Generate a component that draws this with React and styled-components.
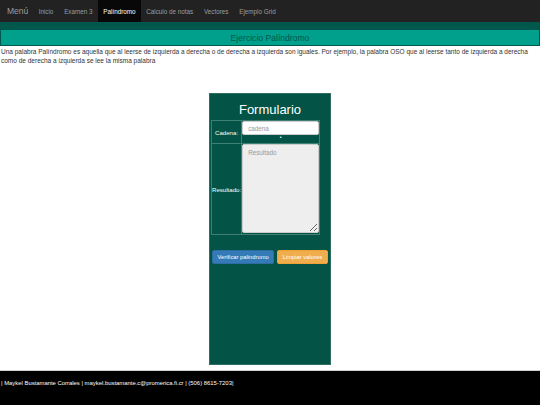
import React from "react";
import styled, { createGlobalStyle } from "styled-components";

const GlobalStyle = createGlobalStyle`
  html, body {
    margin: 0;
    padding: 0;
    background: #ffffff;
    font-family: "Liberation Sans", Arial, sans-serif;
    color: #333333;
  }
  * {
    box-sizing: border-box;
  }
`;

const navItems = ["Inicio", "Examen 3", "Palíndromo", "Calculo de notas", "Vectores", "Ejemplo Grid"];

const App = () => {
  return (
    <>
      <GlobalStyle />
      <Page>
        <Navbar>
          <Brand>Menú</Brand>
          {navItems.map((item) => (
            <NavItem key={item} active={item === "Palíndromo"}>
              {item}
            </NavItem>
          ))}
        </Navbar>
        <Band />
        <TitleBar>Ejercicio Palíndromo</TitleBar>
        <Intro>
          Una palabra Palíndromo es aquella que al leerse de izquierda a derecha o de derecha a
          izquierda son iguales. Por ejemplo, la palabra OSO que al leerse tanto de izquierda a
          derecha como de derecha a izquierda se lee la misma palabra
        </Intro>

        <Main>
          <FormPanel>
            <FormTitle>Formulario</FormTitle>
            <FormTable>
              <tbody>
                <tr>
                  <LabelCell>Cadena:</LabelCell>
                  <FieldCell>
                    <TextInput placeholder="cadena" />
                    <Hint>•</Hint>
                  </FieldCell>
                </tr>
                <tr>
                  <LabelCell>Resultado:</LabelCell>
                  <FieldCell>
                    <ResultArea placeholder="Resultado" readOnly />
                  </FieldCell>
                </tr>
              </tbody>
            </FormTable>
            <Actions>
              <Button variant="primary">Verificar palindromo</Button>
              <Button variant="warning">Limpiar valores</Button>
            </Actions>
          </FormPanel>
        </Main>

        <Footer>
          | Maykel Bustamante Corrales | maykel.bustamante.c@promerica.fi.cr | (506) 8615-7203|
        </Footer>
      </Page>
    </>
  );
};

export default App;

const Page = styled.div`
  width: 540px;
  height: 405px;
  display: flex;
  flex-direction: column;
`;

const Navbar = styled.nav`
  height: 22px;
  background: #222222;
  display: flex;
  align-items: stretch;
  padding-left: 7px;
`;

const Brand = styled.span`
  font-size: 8.5px;
  color: #9d9d9d;
  display: flex;
  align-items: center;
  margin-right: 5px;
`;

const NavItem = styled.span`
  font-size: 6.3px;
  color: ${(props) => (props.active ? "#ffffff" : "#9d9d9d")};
  background: ${(props) => (props.active ? "#080808" : "transparent")};
  display: flex;
  align-items: center;
  padding: 0 5.4px;
`;

const Band = styled.div`
  height: 8px;
  background: #00574b;
`;

const TitleBar = styled.div`
  height: 16px;
  background: #00a08d;
  border: 1px solid #00574b;
  border-top: 0;
  display: flex;
  align-items: center;
  justify-content: center;
  font-size: 8.6px;
  color: #00574b;
`;

const Intro = styled.p`
  margin: 1px 0 0 1px;
  font-size: 6.5px;
  line-height: 9px;
  color: #333333;
`;

const Main = styled.main`
  flex: 1;
  display: flex;
  justify-content: center;
  padding-top: 28px;
`;

const FormPanel = styled.section`
  width: 122px;
  height: 272px;
  background: #035446;
  border: 1px solid #2f6e63;
  padding: 0 1px;
`;

const FormTitle = styled.h2`
  margin: 5px 0 0;
  height: 21px;
  text-align: center;
  font-size: 13px;
  font-weight: normal;
  color: #ffffff;
  line-height: 21px;
`;

const FormTable = styled.table`
  border-collapse: collapse;
  td {
    border: 1px solid #3f8072;
    padding: 0;
  }
`;

const LabelCell = styled.td`
  width: 28px;
  font-size: 6.1px;
  color: #ffffff;
  text-align: center;
  vertical-align: middle;
  white-space: nowrap;
`;

const FieldCell = styled.td`
  vertical-align: top;
`;

const TextInput = styled.input`
  display: block;
  width: 77px;
  height: 14px;
  margin: 0;
  border: 1px solid #cccccc;
  border-radius: 2px;
  padding: 0 5px;
  font-family: "Liberation Sans", Arial, sans-serif;
  font-size: 6.3px;
  color: #555555;
  background: #ffffff;
  outline: none;
  &::placeholder {
    color: #999999;
  }
`;

const Hint = styled.div`
  height: 8px;
  text-align: center;
  font-size: 5px;
  line-height: 5px;
  color: #ffffff;
`;

const ResultArea = styled.textarea`
  display: block;
  width: 77px;
  height: 89px;
  margin: 0 0 1px;
  border: 1px solid #cccccc;
  border-radius: 2px;
  padding: 4px 5px;
  font-family: "Liberation Sans", Arial, sans-serif;
  font-size: 6.3px;
  background: #eeeeee;
  color: #555555;
  outline: none;
  &::placeholder {
    color: #999999;
  }
`;

const Actions = styled.div`
  display: flex;
  gap: 3px;
  margin: 15px 0 0 1px;
`;

const Button = styled.button`
  height: 14px;
  border-radius: 2px;
  padding: 0 4.5px;
  white-space: nowrap;
  font-family: "Liberation Sans", Arial, sans-serif;
  font-size: 5.8px;
  color: #ffffff;
  cursor: pointer;
  background: ${(props) => (props.variant === "primary" ? "#337ab7" : "#f0ad4e")};
  border: 1px solid ${(props) => (props.variant === "primary" ? "#2e6da4" : "#eea236")};
`;

const Footer = styled.footer`
  height: 35px;
  background: #000000;
  border-top: 1px solid #cfcfcf;
  color: #ffffff;
  font-size: 5.9px;
  padding: 9px 0 0 1px;
`;
